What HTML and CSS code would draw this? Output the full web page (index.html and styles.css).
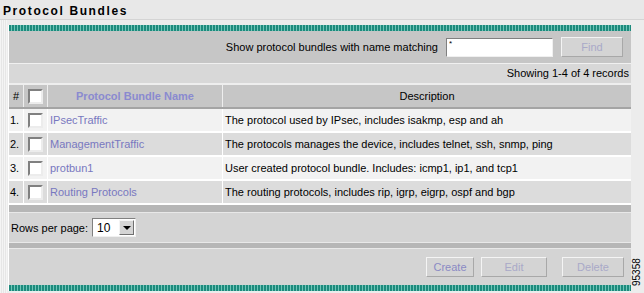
FILE: index.html
```html
<!DOCTYPE html>
<html>
<head>
  <title>Protocol Bundles</title>
  <link rel="stylesheet" href="styles.css">
</head>
<body>
  <div class="page">
    <h1 class="title">Protocol Bundles</h1>
    <div class="panel">
      <div class="stripe"></div>
      <div class="filter">
        <span>Show protocol bundles with name matching</span>
        <input type="text" class="search" value="*">
        <button class="btn find">Find</button>
      </div>
      <div class="count">Showing 1-4 of 4 records</div>
      <table class="grid">
        <thead>
          <tr>
            <th class="num">#</th>
            <th class="chk"><span class="box"></span></th>
            <th class="name">Protocol Bundle Name</th>
            <th class="desc">Description</th>
          </tr>
        </thead>
        <tbody>
          <tr>
            <td class="num">1.</td>
            <td class="chk"><span class="box"></span></td>
            <td><a href="#">IPsecTraffic</a></td>
            <td>The protocol used by IPsec, includes isakmp, esp and ah</td>
          </tr>
          <tr class="alt">
            <td class="num">2.</td>
            <td class="chk"><span class="box"></span></td>
            <td><a href="#">ManagementTraffic</a></td>
            <td>The protocols manages the device, includes telnet, ssh, snmp, ping</td>
          </tr>
          <tr>
            <td class="num">3.</td>
            <td class="chk"><span class="box"></span></td>
            <td><a href="#">protbun1</a></td>
            <td>User created protocol bundle. Includes: icmp1, ip1, and tcp1</td>
          </tr>
          <tr class="alt">
            <td class="num">4.</td>
            <td class="chk"><span class="box"></span></td>
            <td><a href="#">Routing Protocols</a></td>
            <td>The routing protocols, includes rip, igrp, eigrp, ospf and bgp</td>
          </tr>
        </tbody>
      </table>
      <div class="bar"></div>
      <div class="paging">
        <span>Rows per page:</span>
        <span class="select">10<span class="arrow"></span></span>
      </div>
      <div class="bar thin"></div>
      <div class="actions">
        <button class="btn create">Create</button>
        <button class="btn edit">Edit</button>
        <button class="btn delete">Delete</button>
      </div>
      <div class="stripe"></div>
    </div>
    <div class="figure">95358</div>
  </div>
</body>
</html>
```

FILE: styles.css
```css
body {
  margin: 0;
  background: #f4f4f4;
  font-family: "Liberation Sans", Arial, sans-serif;
  font-size: 11px;
  color: #000;
}
.page {
  position: relative;
  width: 644px;
  height: 293px;
  background: repeating-linear-gradient(90deg, #f4f4f4 0 1px, #e6e6e6 1px 2px) left top / 7px 100% no-repeat, #ececec;
}
.title {
  margin: 0;
  height: 20px;
  padding: 4px 0 0 3px;
  box-sizing: border-box;
  font-size: 12px;
  font-weight: bold;
  letter-spacing: 1.6px;
  border-bottom: 1px solid #d4d4d4;
  background: #e8e8e8;
}
.panel {
  margin: 5px 0 0 8px;
  width: 622px;
  border-left: 1px solid #fff;
  background: #d4d4d4;
}
.stripe {
  height: 6px;
  background: repeating-linear-gradient(90deg, #1c8a7c 0 2px, #6fc4b8 2px 3px);
}
.filter {
  display: flex;
  justify-content: flex-end;
  align-items: center;
  gap: 8px;
  height: 32px;
  padding-right: 8px;
  background: #c6c6c6;
  border-bottom: 1px solid #f0f0f0;
}
.search {
  width: 107px;
  height: 19px;
  box-sizing: border-box;
  margin: 0;
  padding: 0 2px 8px;
  border: 1px solid;
  border-color: #808080 #f0f0f0 #f0f0f0 #808080;
  font-family: inherit;
  font-size: 8px;
  line-height: 10px;
}
.btn {
  height: 20px;
  box-sizing: border-box;
  border: 1px solid;
  border-color: #f4f4f4 #a8a8a8 #a8a8a8 #f4f4f4;
  background: #d4d4d4;
  color: #a9a9c8;
  font-family: inherit;
  font-size: 11px;
  padding: 0;
}
.find {
  width: 62px;
}
.count {
  height: 19px;
  line-height: 19px;
  text-align: right;
  padding-right: 2px;
  background: #d8d8d8;
  border-bottom: 2px solid #eeeeee;
}
.grid {
  width: 100%;
  border-collapse: collapse;
  table-layout: fixed;
}
.grid th {
  height: 22px;
  background: #c6c6c6;
  font-weight: normal;
  border-left: 1px solid #eeeeee;
  border-bottom: 2px solid #a4a4a4;
  padding: 0;
}
.grid th:first-child,
.grid td:first-child {
  border-left: none;
}
.grid th.name {
  width: 174px;
  font-weight: bold;
  color: #8a8ad0;
}
.grid td {
  height: 22px;
  padding: 0 2px;
  background: #f2f2f2;
  border-left: 1px solid #fff;
  border-bottom: 2px solid #fff;
  white-space: nowrap;
}
.grid tr.alt td {
  background: #dcdcdc;
}
.grid td.num,
.grid th.num {
  width: 13px;
  padding: 0 0 0 1px;
  text-align: left;
}
.grid th.num {
  padding-left: 4px;
  width: 10px;
}
.grid .chk {
  width: 19px;
  padding: 0 0 0 4px;
  text-align: left;
}
.box {
  display: inline-block;
  width: 15px;
  height: 15px;
  vertical-align: middle;
  box-sizing: border-box;
  background: #fff;
  border: 2px solid;
  border-color: #808080 #ececec #ececec #808080;
}
.grid a {
  color: #7878c0;
  text-decoration: none;
}
.bar {
  height: 7px;
  background: #b6b6b6;
  border-bottom: 1px solid #e8e8e8;
}
.bar.thin {
  height: 5px;
  border-top: 1px solid #e8e8e8;
}
.paging {
  display: flex;
  align-items: center;
  gap: 4px;
  height: 29px;
  padding-left: 2px;
}
.select {
  display: inline-flex;
  align-items: center;
  justify-content: space-between;
  width: 44px;
  height: 19px;
  box-sizing: border-box;
  padding: 0 1px 0 4px;
  background: #fff;
  font-size: 12px;
  border: 1px solid;
  border-color: #808080 #f0f0f0 #f0f0f0 #808080;
}
.arrow {
  position: relative;
  width: 15px;
  height: 15px;
  box-sizing: border-box;
  background: #d4d4d4;
  border: 1px solid;
  border-color: #f4f4f4 #707070 #707070 #f4f4f4;
}
.arrow::after {
  content: "";
  position: absolute;
  left: 3px;
  top: 5px;
  border-left: 4px solid transparent;
  border-right: 4px solid transparent;
  border-top: 4px solid #000;
}
.actions {
  display: flex;
  justify-content: flex-end;
  align-items: center;
  gap: 7px;
  height: 36px;
  padding-right: 7px;
}
.create {
  width: 48px;
  color: #8a8ac4;
}
.edit {
  width: 66px;
}
.delete {
  width: 62px;
  margin-left: 8px;
}
.figure {
  position: absolute;
  left: 632px;
  top: 286px;
  transform: rotate(-90deg);
  transform-origin: left top;
  font-size: 10px;
  line-height: 10px;
}
```
